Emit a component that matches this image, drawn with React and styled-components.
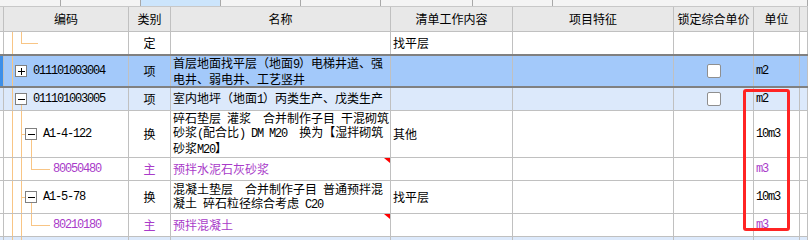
import React from 'react';
import styled, { createGlobalStyle } from 'styled-components';

const GlobalStyle = createGlobalStyle`
  html, body {
    margin: 0;
    padding: 0;
    background: #fff;
  }
  body {
    font-family: "Noto Sans CJK SC", "Noto Sans", sans-serif;
    font-size: 12px;
    color: #000;
  }
  * {
    box-sizing: border-box;
  }
`;

const COLS = '4px 125px 42px 220px 122px 161px 80px 46px 1fr';
const PURPLE = '#a93bc9';
const LINE = '#c0c0c0';
const TREE = '#f8c585';

const Sheet = styled.div`
  position: relative;
  width: 808px;
  height: 240px;
  overflow: hidden;
  background: #fff;
`;

const Strip = styled.div`
  display: flex;
  height: 7px;
  background: #f4f4f4;
  border-bottom: 1px solid #c8c8c8;
`;

const StripCell = styled.div`
  flex: ${p => (p.$w ? `0 0 ${p.$w}px` : '1')};
  background: ${p => (p.$active ? '#cce5fc' : 'transparent')};
  border-right: 1px solid #a8a8a8;
`;

const Row = styled.div`
  display: grid;
  grid-template-columns: ${COLS};
  height: ${p => p.$h}px;
  background: ${p => p.$bg || '#fff'};
  border-bottom: ${p => (p.$flat ? 'none' : `1px solid ${LINE}`)};
  ${p => p.$selected && 'border-top: 2px solid #808080; border-bottom: 2px solid #808080;'}
`;

const HeadRow = styled(Row)`
  background: #e8e8e8;
`;

const Cell = styled.div`
  position: relative;
  display: flex;
  align-items: center;
  justify-content: ${p => (p.$center ? 'center' : 'flex-start')};
  padding-left: ${p => (p.$center ? 0 : p.$indent ?? 2)}px;
  border-right: 1px solid ${LINE};
  line-height: 14px;
  white-space: nowrap;
  color: ${p => (p.$purple ? PURPLE : '#000')};
`;

const RowHead = styled.div`
  border-right: 1px solid ${LINE};
  background: ${p => (p.$active ? '#3d8fe8' : 'transparent')};
`;

const Mono = styled.span`
  position: relative;
  font-family: "Liberation Mono", "DejaVu Sans Mono", monospace;
  letter-spacing: -1.2px;
`;

const Guides = styled.svg`
  position: absolute;
  left: 0;
  top: 0;
`;

const Flag = styled.span`
  position: absolute;
  top: 0;
  right: 0;
  width: 0;
  height: 0;
  border-top: 5px solid #ff0000;
  border-left: 6px solid transparent;
`;

const Check = styled.span`
  width: 14px;
  height: 14px;
  background: #fff;
  border: 1px solid #8f8f8f;
  border-radius: 2px;
`;

const Highlight = styled.div`
  position: absolute;
  left: 743px;
  top: 89px;
  width: 47px;
  height: 142px;
  border: 3px solid #ff2424;
  border-radius: 3px;
  pointer-events: none;
`;

// half-width runs (codes, grades) get the narrow mono face
function withLatin(text) {
  return text.split(/([A-Za-z0-9()]+)/).map((part, i) =>
    i % 2 ? <Mono key={i}>{part}</Mono> : part
  );
}

// tree connectors for the code column, per kind of node
function treeFor(kind, h) {
  const m = Math.floor(h / 2);
  const t = Math.round((h - 12) / 2);
  const lines = [[8, 0, 8, h]];
  let box = null;
  switch (kind) {
    case 'elbow':
      lines.push([17, 0, 17, m], [17, m, 34, m]);
      break;
    case 'closed':
      box = { x: 11, y: t, plus: true };
      break;
    case 'open':
      box = { x: 11, y: t };
      lines.push([17, t + 12, 17, h]);
      break;
    case 'branch':
      lines.push([17, 0, 17, h], [17, m, 21, m], [27, t + 12, 27, h]);
      box = { x: 21, y: t };
      break;
    case 'leaf':
      lines.push([17, 0, 17, h], [27, 0, 27, m], [27, m, 46, m]);
      break;
    default:
      lines.push([17, 0, 17, h]);
  }
  return { lines, box };
}

function TreeLines({ kind, h }) {
  const { lines, box } = treeFor(kind, h);
  return (
    <Guides width="125" height={h} viewBox={`0 0 125 ${h}`}>
      {lines.map(([x1, y1, x2, y2], i) =>
        x1 === x2 ? (
          <line key={i} x1={x1 + 0.5} y1={y1} x2={x2 + 0.5} y2={y2} stroke={TREE} />
        ) : (
          <line key={i} x1={x1} y1={y1 + 0.5} x2={x2} y2={y2 + 0.5} stroke={TREE} />
        )
      )}
      {box && (
        <g>
          <rect x={box.x + 0.5} y={box.y + 0.5} width="11" height="11" fill="#fff" stroke="#808080" />
          <line x1={box.x + 3} y1={box.y + 6.5} x2={box.x + 10} y2={box.y + 6.5} stroke="#000" />
          {box.plus && (
            <line x1={box.x + 6.5} y1={box.y + 3} x2={box.x + 6.5} y2={box.y + 10} stroke="#000" />
          )}
        </g>
      )}
    </Guides>
  );
}

const indentFor = { closed: 29, open: 29, branch: 39, leaf: 49 };

const items = [
  { h: 22, tree: 'elbow', kind: '定', work: '找平层', flat: true },
  {
    h: 34, tree: 'closed', code: '011101003004', kind: '项', selected: true, bg: '#a3c9fa',
    name: ['首层地面找平层（地面9）电梯井道、强', '电井、弱电井、工艺竖井'], lock: true, unit: 'm2',
  },
  {
    h: 23, tree: 'open', code: '011101003005', kind: '项', bg: '#dce9fb',
    name: ['室内地坪（地面1）丙类生产、戊类生产'], lock: true, unit: 'm2',
  },
  {
    h: 47, tree: 'branch', code: 'A1-4-122', kind: '换', work: '其他', unit: '10m3',
    name: [
      '碎石垫层\u2002灌浆\u2002\u2002合并制作子目\u2002干混砌筑',
      '砂浆(配合比)\u2002DM\u2002M20\u2002\u2002换为【湿拌砌筑',
      '砂浆M20】',
    ],
  },
  { h: 23, tree: 'leaf', code: '80050480', kind: '主', name: ['预拌水泥石灰砂浆'], unit: 'm3', purple: true, flag: true },
  {
    h: 33, tree: 'branch', code: 'A1-5-78', kind: '换', work: '找平层', unit: '10m3',
    name: ['混凝土垫层\u2002\u2002合并制作子目\u2002普通预拌混', '凝土\u2002碎石粒径综合考虑\u2002C20'],
  },
  { h: 23, tree: 'leaf', code: '80210180', kind: '主', name: ['预拌混凝土'], unit: 'm3', purple: true, flag: true },
  { h: 12, tree: 'pass', bg: '#dce9fb' },
];

const headers = ['编码', '类别', '名称', '清单工作内容', '项目特征', '锁定综合单价', '单位'];

function BodyRow({ item }) {
  const inner = item.h - (item.selected ? 4 : item.flat ? 0 : 1);
  return (
    <Row $h={item.h} $bg={item.bg} $flat={item.flat} $selected={item.selected}>
      <RowHead $active={item.selected} />
      <Cell $indent={indentFor[item.tree] || 2} $purple={item.purple}>
        <TreeLines kind={item.tree} h={inner} />
        {item.code && <Mono>{item.code}</Mono>}
      </Cell>
      <Cell $center $purple={item.purple}>{item.kind}</Cell>
      <Cell $purple={item.purple}>
        {item.name && (
          <span>
            {item.name.map((line, i) => (
              <React.Fragment key={i}>
                {i > 0 && <br />}
                {withLatin(line)}
              </React.Fragment>
            ))}
          </span>
        )}
        {item.flag && <Flag />}
      </Cell>
      <Cell>{item.work}</Cell>
      <Cell />
      <Cell $center>{item.lock && <Check />}</Cell>
      <Cell $purple={item.purple}>{item.unit && <Mono>{item.unit}</Mono>}</Cell>
      <Cell />
    </Row>
  );
}

export default function App() {
  return (
    <>
      <GlobalStyle />
      <Sheet>
        <Strip>
          <StripCell $w={61} />
          <StripCell $w={80} />
          <StripCell $w={80} $active />
          <StripCell $w={80} />
          <StripCell $w={80} />
          <StripCell $w={92} />
          <StripCell $w={80} />
          <StripCell />
        </Strip>
        <HeadRow $h={25}>
          <RowHead />
          {headers.map(h => (
            <Cell key={h} $center>{h}</Cell>
          ))}
          <Cell />
        </HeadRow>
        {items.map((item, i) => (
          <BodyRow key={i} item={item} />
        ))}
        <Highlight />
      </Sheet>
    </>
  );
}
